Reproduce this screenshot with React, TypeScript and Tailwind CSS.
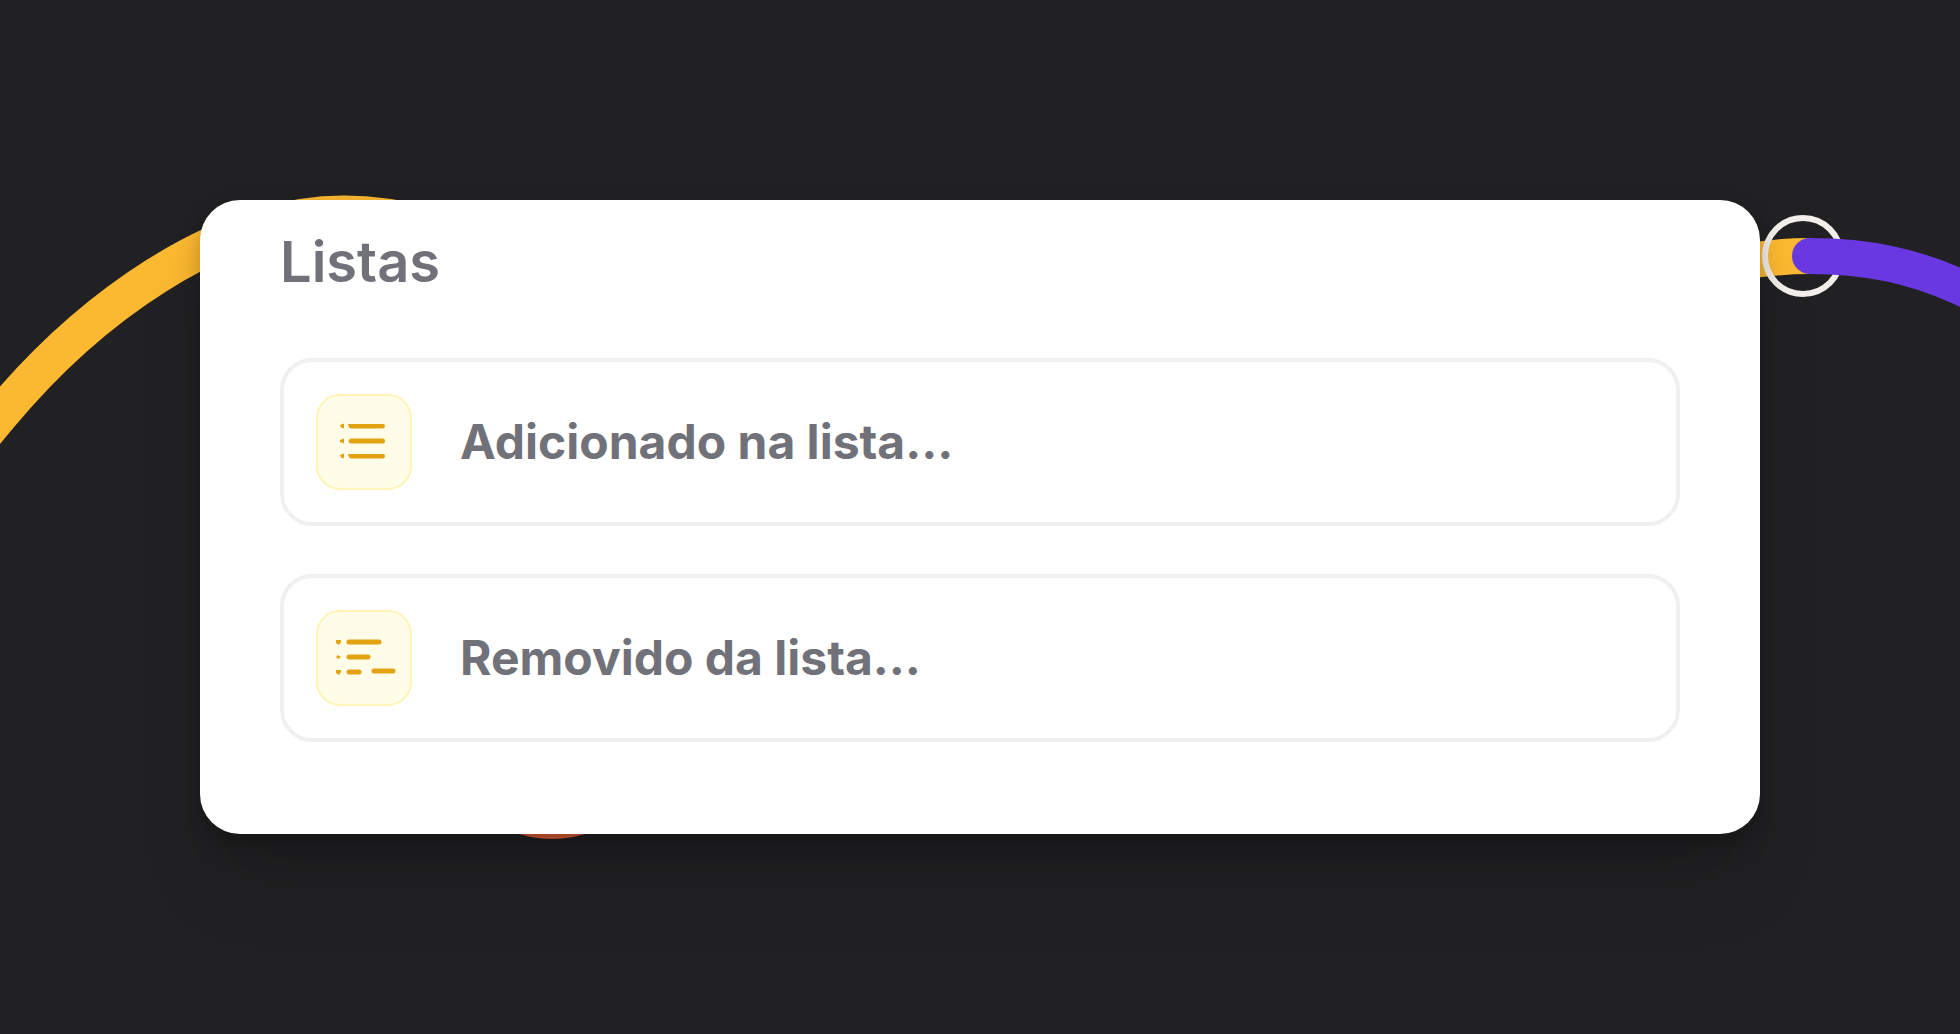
function ListIcon() {
  return (
    <svg viewBox="0 0 92 92" className="size-full" aria-hidden="true" fill="#e5a210" stroke="none">
      <path d="M30 28H65Q67 28 67 30T65 32.500H33Q31 32.500 30 28.500ZM33 42.500H65Q67 42.500 67 45T65 47.500H33Q30.500 47 30.500 45T33 42.500ZM30 58H65Q67 58 67 60T65 62.500H33Q31 62.500 30 58.500Z" />
      <path d="M22 29L26 27.500V32.500L23 31.500ZM22 44L26 42.500V47.500L22 46ZM22 59L26 57.500V62.500L23 61.500Z" />
    </svg>
  );
}

function ListRemoveIcon() {
  return (
    <svg viewBox="0 0 92 92" className="size-full" aria-hidden="true" fill="none" stroke="#e5a210" strokeLinecap="round">
      <path strokeWidth="5" d="M31 30H61M31 45H50M31 60H41M56 59H75" />
      <path
        fill="#e5a210"
        stroke="none"
        d="M18 28H23V30L21 33L18 31ZM18 45L20 43L23 45L20 47ZM18 58H23V60L21 63L18 61Z"
      />
    </svg>
  );
}

const items = [
  { label: "Adicionado na lista…", Icon: ListIcon },
  { label: "Removido da lista…", Icon: ListRemoveIcon },
];

function Backdrop() {
  return (
    <svg
      className="absolute inset-0 size-full"
      viewBox="0 0 1960 1034"
      preserveAspectRatio="xMidYMid slice"
      fill="none"
      aria-hidden="true"
    >
      <path d="M-60 493C-42 467-22 441 0 415C85 313 215 214 344 214C430 214 500 250 560 310" stroke="#fbb831" strokeWidth="37" />
      <path d="M1700 270C1740 261 1775 256 1810 256" stroke="#fbb831" strokeWidth="36" />
      <circle cx="552" cy="729" r="110" fill="#e8603a" />
      <circle cx="1803" cy="256" r="38" stroke="#f2eeea" strokeWidth="6" />
      <path d="M1810 256C1870 256 1915 267 1960 287L2010 312" stroke="#6938e0" strokeWidth="36" strokeLinecap="round" />
    </svg>
  );
}

export default function App() {
  return (
    <main className="relative flex min-h-screen flex-col justify-center overflow-hidden bg-[#212123] p-[200px] font-['Inter',sans-serif]">
      <Backdrop />
      <section className="relative rounded-[40px] bg-white px-20 pt-7 pb-[92px] shadow-[0_60px_80px_-16px_rgba(0,0,0,0.15),0_10px_24px_rgba(0,0,0,0.25)]">
        <h2 className="text-[56px] leading-[68px] font-semibold text-[#71717a]">Listas</h2>
        <div className="mt-[62px] flex flex-col gap-12">
          {items.map(({ label, Icon }) => (
            <button
              key={label}
              type="button"
              className="flex w-full items-center gap-12 rounded-[32px] border-4 border-[#f0f0f0] p-8 text-left"
            >
              <span className="size-24 shrink-0 rounded-3xl border-2 border-[#fff5b8] bg-[#fffde8]">
                <Icon />
              </span>
              <span className="text-[48px] leading-[56px] font-bold text-[#71717a]">{label}</span>
            </button>
          ))}
        </div>
      </section>
    </main>
  );
}
